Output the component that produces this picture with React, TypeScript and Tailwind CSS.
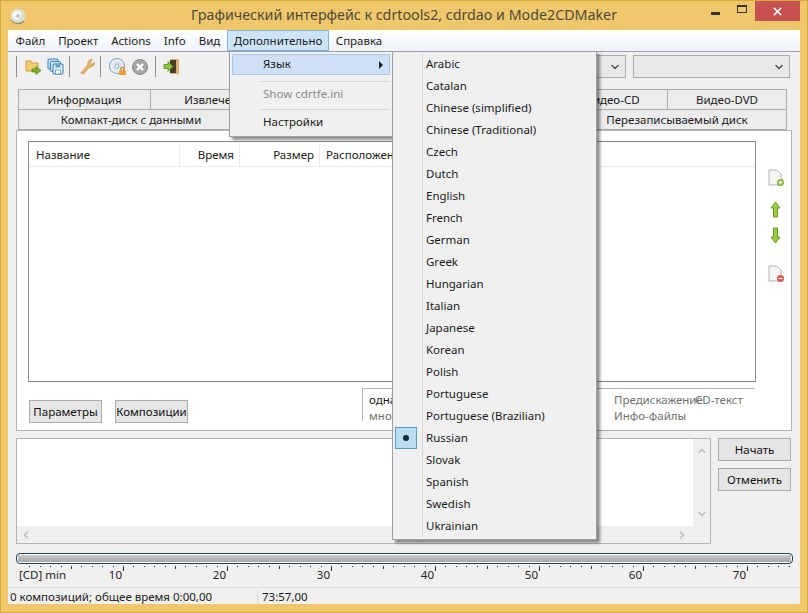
import { ChevronDown, ChevronLeft, ChevronRight, ChevronUp, X } from 'lucide-react';

const languages = [
  'Arabic', 'Catalan', 'Chinese (simplified)', 'Chinese (Traditional)', 'Czech', 'Dutch', 'English', 'French',
  'German', 'Greek', 'Hungarian', 'Italian', 'Japanese', 'Korean', 'Polish', 'Portuguese', 'Portuguese (Brazilian)',
  'Russian', 'Slovak', 'Spanish', 'Swedish', 'Ukrainian',
];

const menus = ['Файл', 'Проект', 'Actions', 'Info', 'Вид'];

const Sep = () => <div className="w-px h-[21px] bg-[#8c8c8c]" />;

const FolderIcon = () => (
  <svg width="17" height="17" viewBox="0 0 17 17">
    <path d="M1 3h5l1 2h6v8H1z" fill="#f2cf6e" stroke="#c9a040" />
    <path d="M7 11h4V8.5l5 4-5 4V14H7z" fill="#7fb52c" stroke="#4f7d12" strokeWidth="0.7" />
  </svg>
);

const SaveIcon = () => (
  <svg width="17" height="17" viewBox="0 0 17 17">
    <rect x="1" y="1" width="10" height="10" rx="1" fill="#bcdcf2" stroke="#3f83b5" />
    <rect x="3.5" y="3.5" width="10" height="10" rx="1" fill="#cfe6f6" stroke="#3f83b5" />
    <rect x="6" y="6" width="10" height="10" rx="1" fill="#e3f1fa" stroke="#2f76ab" />
    <rect x="8.5" y="6.5" width="5" height="3" fill="#5fa0cc" />
    <rect x="8.5" y="12" width="5" height="4" fill="#fff" stroke="#2f76ab" strokeWidth="0.6" />
  </svg>
);

const WrenchIcon = () => (
  <svg width="16" height="17" viewBox="0 0 16 17">
    <path d="M2 15l7-8c-.8-2.500.8-5.500 4-5.500l-2 3 2 2 2.500-2c.3 3-2.500 5-5 4.300l-6 7.200z" fill="#eeb463" stroke="#c98a3a" strokeWidth="0.8" />
  </svg>
);

const DiscIcon = () => (
  <svg width="18" height="18" viewBox="0 0 18 18">
    <circle cx="8" cy="8" r="7.500" fill="#e8eef3" stroke="#7aa4c4" />
    <circle cx="8" cy="8" r="4" fill="#cfe0ee" />
    <circle cx="8" cy="8" r="1.700" fill="#fff" stroke="#6b93b2" strokeWidth="0.6" />
    <path d="M10 17v-4.500h7V17z" fill="#f0992c" />
    <path d="M11.800 12.500v-1.500a1.700 1.700 0 013.400 0v1.500" fill="none" stroke="#d9801c" strokeWidth="1.200" />
  </svg>
);

const StopIcon = () => (
  <svg width="16" height="16" viewBox="0 0 16 16">
    <circle cx="8" cy="8" r="7.500" fill="#a6a6a6" stroke="#8a8a8a" />
    <path d="M5 5l6 6M11 5l-6 6" stroke="#fff" strokeWidth="2.400" />
  </svg>
);

const ExitIcon = () => (
  <svg width="17" height="17" viewBox="0 0 17 17">
    <rect x="7" y="1" width="9" height="15" fill="#e0b070" />
    <rect x="7" y="2" width="6" height="13" fill="#4a3a28" />
    <path d="M1 6.500h4V3.500l5 5-5 5v-3H1z" fill="#8cc63f" stroke="#4f7d12" strokeWidth="0.7" />
  </svg>
);

const PageBase = () => (
  <path d="M1 1h8l4 4v11H1z" fill="#f4f4f4" stroke="#b4b4b4" />
);

const PageAdd = () => (
  <svg width="17" height="18" viewBox="0 0 17 18">
    <PageBase />
    <circle cx="12.500" cy="13.500" r="3.500" fill="#7fb52c" />
    <path d="M10.500 13.500h4M12.500 11.500v4" stroke="#fff" strokeWidth="1.300" />
  </svg>
);

const PageRemove = () => (
  <svg width="17" height="18" viewBox="0 0 17 18">
    <PageBase />
    <circle cx="12.500" cy="13.500" r="3.500" fill="#d9534a" />
    <path d="M10.500 13.500h4" stroke="#fff" strokeWidth="1.300" />
  </svg>
);

const ArrowUp = () => (
  <svg width="11" height="17" viewBox="0 0 11 17">
    <path d="M5.500 1l4.500 6H7.500v9h-4V7H1z" fill="#9ccc3c" stroke="#6b9a1c" />
  </svg>
);

const ArrowDown = () => (
  <svg width="11" height="17" viewBox="0 0 11 17">
    <path d="M5.500 16L1 10h2.500V1h4v9H10z" fill="#9ccc3c" stroke="#6b9a1c" />
  </svg>
);

const AppIcon = () => (
  <svg width="18" height="18" viewBox="0 0 18 18">
    <circle cx="9" cy="9" r="7.500" fill="#dedbd0" />
    <circle cx="8" cy="8" r="4.500" fill="#f6f5ef" />
    <circle cx="9" cy="9" r="1.800" fill="#bdbab0" />
    <path d="M2 13c3 4 9 5 13 1" fill="none" stroke="#8d8a70" strokeWidth="1.200" />
  </svg>
);

const ticks = Array.from({ length: 75 }, (_, i) => i);

const Ruler = () => (
  <svg className="absolute left-0 top-0" width="792" height="10">
    {ticks.map((m) => {
      const x = Math.round(3 + m * 10.4);
      const h = m % 10 === 0 ? 5 : m % 5 === 0 ? 3 : 1;
      if (m === 0) return null;
      return <rect key={m} x={x} y={2} width={1} height={h} fill="#333" />;
    })}
  </svg>
);

const Button = ({ label, className }: { label: string; className: string }) => (
  <button type="button" className={`h-[23px] border border-[#acacac] bg-[#e5e5e5] text-[#111] ${className}`}>
    {label}
  </button>
);

export default function App() {
  return (
    <div className="relative w-[808px] h-[613px] overflow-hidden flex flex-col bg-[#f0c76a] border border-[#d9a93f] font-['Noto_Sans',sans-serif] text-[11.5px] leading-none text-[#1a1a1a]">
      {/* title bar */}
      <div className="h-[29px] shrink-0 flex items-center relative pl-[8px]">
        <AppIcon />
        <div className="flex-1 text-center text-[14.25px] text-[#4f4a3c] pr-[26px]">
          Графический интерфейс к cdrtools2, cdrdao и Mode2CDMaker
        </div>
        <div className="absolute right-[7px] top-0 flex">
          <div className="w-[27px] h-[20px] flex items-center justify-center">
            <div className="w-[9px] h-[3px] bg-[#333] mt-[4px]" />
          </div>
          <div className="w-[26px] h-[20px] flex items-center justify-center">
            <div className="w-[10px] h-[8px] border border-[#333] border-t-[2px] mb-[4px]" />
          </div>
          <div className="w-[45px] h-[20px] bg-[#c75050] flex items-center justify-center">
            <X size={13} color="#fff" strokeWidth={3} />
          </div>
        </div>
      </div>

      <div className="mx-[7px] flex-1 min-h-0 flex flex-col bg-[#f0f0f0]">
        {/* menu bar */}
        <div className="h-[21px] shrink-0 flex items-center bg-gradient-to-b from-[#ffffff] to-[#eef3f9] pl-[1px]">
          {menus.map((m) => (
            <div key={m} className="px-[6.5px] h-full flex items-center">{m}</div>
          ))}
          <div className="px-[6px] h-full flex items-center bg-[#cde4f7] border border-[#7fb4de]">Дополнительно</div>
          <div className="px-[6.5px] h-full flex items-center">Справка</div>
        </div>

        {/* toolbar */}
        <div className="h-[30px] shrink-0 flex items-center border-t border-[#a0a0a0] pl-[8px] pr-[10px]">
          <Sep />
          <div className="ml-[8px] flex items-center gap-[5px]">
            <FolderIcon />
            <SaveIcon />
          </div>
          <div className="ml-[5px]"><Sep /></div>
          <div className="ml-[9px]"><WrenchIcon /></div>
          <div className="ml-[5px]"><Sep /></div>
          <div className="ml-[8px] flex items-center gap-[5px]">
            <DiscIcon />
            <StopIcon />
          </div>
          <div className="ml-[7px]"><Sep /></div>
          <div className="ml-[7px]"><ExitIcon /></div>
          <div className="ml-auto flex gap-[7px]">
            <div className="w-[40px] h-[23px] border border-[#acacac] bg-[#e9e9e9] flex items-center justify-end pr-[4px]">
              <ChevronDown size={12} color="#555" strokeWidth={3} />
            </div>
            <div className="w-[157px] h-[23px] border border-[#acacac] bg-[#e9e9e9] flex items-center justify-end pr-[4px]">
              <ChevronDown size={12} color="#555" strokeWidth={3} />
            </div>
          </div>
        </div>

        {/* tabs */}
        <div className="mt-[8px] pl-[10px] shrink-0">
          <div className="flex h-[21px]">
            <div className="w-[133px] flex items-center justify-center border border-[#acacac] bg-[#ececec]">Информация</div>
            <div className="w-[135px] flex items-center justify-center border border-l-0 border-[#acacac] bg-[#ececec]">Извлечение</div>
            <div className="w-[272px] border border-l-0 border-[#acacac] bg-[#ececec]" />
            <div className="w-[110px] flex items-center justify-center border border-l-0 border-[#acacac] bg-[#ececec]">Видео-CD</div>
            <div className="w-[119px] flex items-center justify-center border border-l-0 border-[#acacac] bg-[#ececec]">Видео-DVD</div>
          </div>
          <div className="flex h-[20px]">
            <div className="w-[226px] flex items-center justify-center border border-t-0 border-[#acacac] bg-[#ececec]">Компакт-диск с данными</div>
            <div className="w-[324px] border border-l-0 border-t-0 border-[#acacac] bg-[#ececec]" />
            <div className="w-[219px] flex items-center justify-center border border-l-0 border-t-0 border-[#acacac] bg-[#ececec]">Перезаписываемый диск</div>
          </div>
        </div>

        {/* data panel */}
        <div className="ml-[8px] mr-[8px] h-[301px] shrink-0 bg-white border border-[#b4b4b4] flex flex-col pt-[10px] pl-[11px]">
          <div className="flex h-[241px] shrink-0">
            <div className="w-[728px] border border-[#8a8a8a]">
              <div className="h-[25px] flex items-center border-b border-[#ececec] pt-[2px]">
                <div className="w-[151px] pl-[7px] h-full flex items-center border-r border-[#ececec]">Название</div>
                <div className="w-[60px] pr-[5px] h-full flex items-center justify-end border-r border-[#ececec]">Время</div>
                <div className="w-[80px] pr-[5px] h-full flex items-center justify-end border-r border-[#ececec]">Размер</div>
                <div className="w-[299px] pl-[6px] h-full flex items-center">Расположение</div>
              </div>
            </div>
            <div className="flex-1 flex flex-col items-center">
              <div className="mt-[28px] ml-[5px]"><PageAdd /></div>
              <div className="mt-[14px] ml-[3px]"><ArrowUp /></div>
              <div className="mt-[9px] ml-[3px]"><ArrowDown /></div>
              <div className="mt-[21px] ml-[5px]"><PageRemove /></div>
            </div>
          </div>
          <div className="flex mt-[6px]">
            <div className="flex gap-[13px] pt-[12px] pl-[1px] w-[334px]">
              <Button label="Параметры" className="w-[73px]" />
              <Button label="Композиции" className="w-[73px]" />
            </div>
            <div className="w-[393px] h-[33px] border-t border-l border-[#b4b4b4] overflow-hidden pl-[6px] pt-[5px] flex">
              <div className="w-[245px] flex flex-col gap-[4px]">
                <div>одна</div>
                <div className="text-[#6f6f6f]">много</div>
              </div>
              <div className="flex flex-col gap-[4px] text-[#6f6f6f]">
                <div className="flex">
                  <span className="w-[81px] whitespace-nowrap">Предискажение</span>
                  <span>CD-текст</span>
                </div>
                <div>Инфо-файлы</div>
              </div>
            </div>
          </div>
        </div>

        {/* log and actions */}
        <div className="ml-[8px] mt-[7px] h-[106px] shrink-0 flex">
          <div className="w-[695px] border border-[#b4b4b4] flex flex-col">
            <div className="flex-1 flex min-h-0">
              <div className="flex-1 bg-white" />
              <div className="w-[17px] flex flex-col items-center justify-between py-[6px]">
                <ChevronUp size={12} color="#bdbdbd" strokeWidth={3} />
                <ChevronDown size={12} color="#bdbdbd" strokeWidth={3} />
              </div>
            </div>
            <div className="h-[17px] flex items-center justify-between px-[3px] pr-[22px]">
              <ChevronLeft size={12} color="#bdbdbd" strokeWidth={3} />
              <ChevronRight size={12} color="#bdbdbd" strokeWidth={3} />
            </div>
          </div>
          <div className="ml-[7px] flex flex-col gap-[7px]">
            <Button label="Начать" className="w-[73px]" />
            <Button label="Отменить" className="w-[73px]" />
          </div>
        </div>

        {/* capacity bar and ruler */}
        <div className="ml-[8px] mt-[9px] w-[777px] h-[11px] shrink-0 rounded-[4px] border border-[#1f3f5f] bg-white p-px">
          <div className="h-full bg-gradient-to-b from-[#c9c9c9] to-[#a6a6a6]" />
        </div>
        <div className="relative ml-[8px] h-[23px] shrink-0 flex items-end pb-[6px] text-[#222]">
          <Ruler />
          <div className="w-[103px] pl-[3px] h-[12px]">[CD] min</div>
          {[10, 20, 30, 40, 50, 60, 70].map((n, i) => (
            <div key={n} className={i === 0 ? 'w-[3px] flex justify-end h-[12px]' : 'w-[104px] flex justify-end h-[12px]'}>
              {n}
            </div>
          ))}
        </div>

        {/* status bar */}
        <div className="flex-1 min-h-0 flex items-center border-t border-[#dcdcdc] relative pt-[2px]">
          <div className="w-[250px] h-full flex items-center pl-[2px] border-r border-[#dcdcdc]">0 композиций; общее время 0:00,00</div>
          <div className="pl-[4px]">73:57,00</div>
        </div>
      </div>
      <div className="h-[8px] shrink-0" />

      {/* open menus */}
      <div className="absolute left-[228px] top-[50px] w-[164px] h-[86px] bg-[#f0f0f0] border border-[#a0a0a0] shadow-[3px_3px_3px_rgba(0,0,0,0.45)] p-[2px] flex flex-col">
        <div className="h-[21px] flex items-center bg-[#cde0f5] border border-[#a9c9ea] pl-[30px] pr-[6px] justify-between">
          <span className="-mt-[1px]">Язык</span>
          <div className="w-0 h-0 border-y-[4px] border-y-transparent border-l-[4px] border-l-[#222]" />
        </div>
        <div className="mt-[6px] ml-[28px] h-px bg-[#d5d5d5]" />
        <div className="h-[21px] mt-[1px] flex items-center pl-[31px] text-[#8a8a8a]">Show cdrtfe.ini</div>
        <div className="mt-[5px] ml-[28px] h-px bg-[#d5d5d5]" />
        <div className="h-[21px] mt-[1px] flex items-center pl-[31px]">Настройки</div>
      </div>
      <div className="absolute left-[391px] top-[50px] w-[205px] h-[489px] bg-[#f0f0f0] border border-[#a0a0a0] shadow-[3px_3px_3px_rgba(0,0,0,0.45)] pt-[1px] pl-[2px] pb-[3px]">
        <div className="h-full flex flex-col">
          {languages.map((l) => (
            <div key={l} className="h-[22px] shrink-0 flex items-center">
              <div className="w-[26px] h-[22px] flex items-center justify-start">
                {l === 'Russian' && (
                  <div className="w-[22px] h-[22px] bg-[#bcdcf0] border border-[#4f9fce] flex items-center justify-center">
                    <div className="w-[6px] h-[6px] rounded-full bg-[#1a2a3a]" />
                  </div>
                )}
              </div>
              <div className="w-px h-[22px] bg-[#d5d5d5] ml-[1px]" />
              <div className="pl-[3px]">{l}</div>
            </div>
          ))}
        </div>
      </div>
    </div>
  );
}
